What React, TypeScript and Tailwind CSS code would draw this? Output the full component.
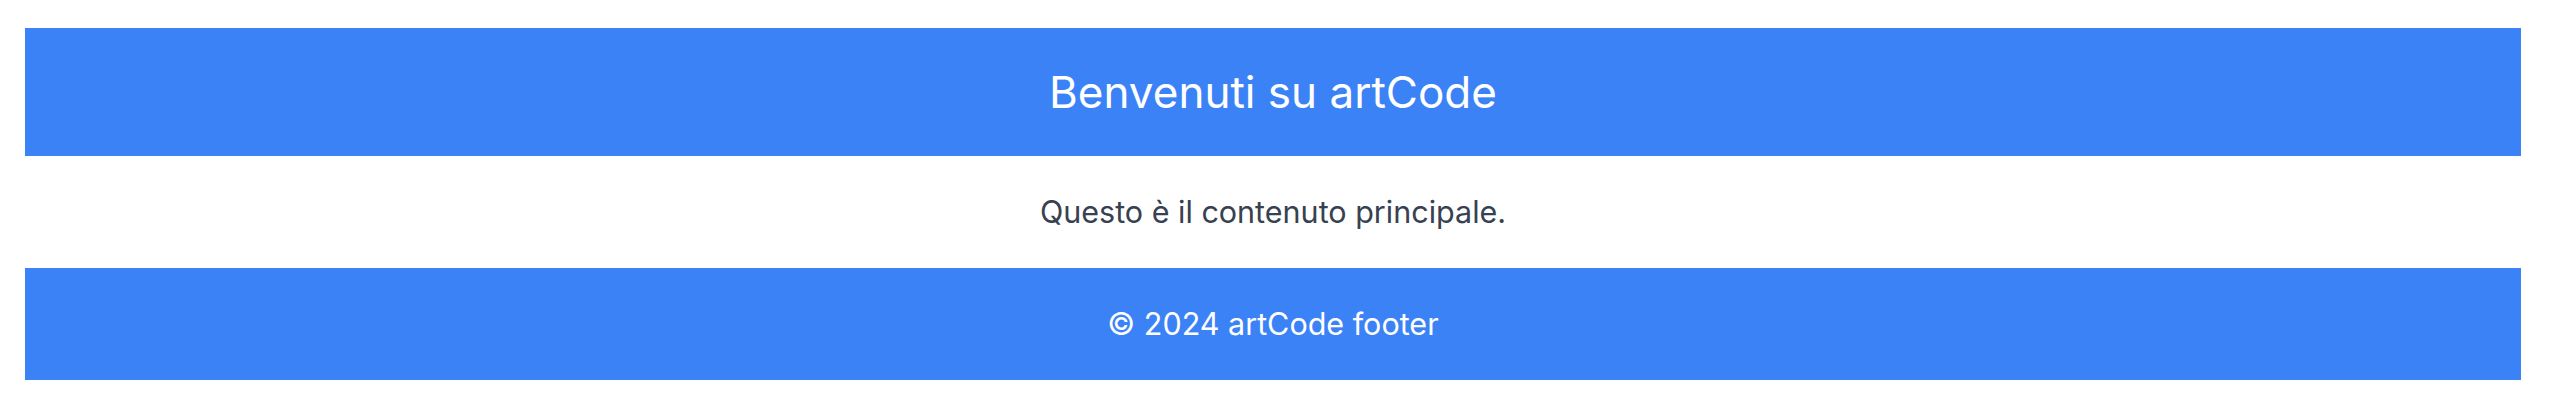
import React from "react";

const App: React.FC = () => {
  return (
    <div className="min-h-screen bg-white font-['Inter',sans-serif] pt-[28px] pl-[25px] pr-[29px]">
      <header className="flex h-[128px] items-center justify-center bg-[#3b82f6] text-white">
        <h1 className="text-[44px] leading-none">Benvenuti su artCode</h1>
      </header>
      <main className="flex h-[112px] items-center justify-center">
        <p className="text-[30.5px] text-[#374151]">Questo è il contenuto principale.</p>
      </main>
      <footer className="flex h-[112px] items-center justify-center bg-[#3b82f6] text-white">
        <p className="text-[30.5px]">© 2024 artCode footer</p>
      </footer>
    </div>
  );
};

export default App;
